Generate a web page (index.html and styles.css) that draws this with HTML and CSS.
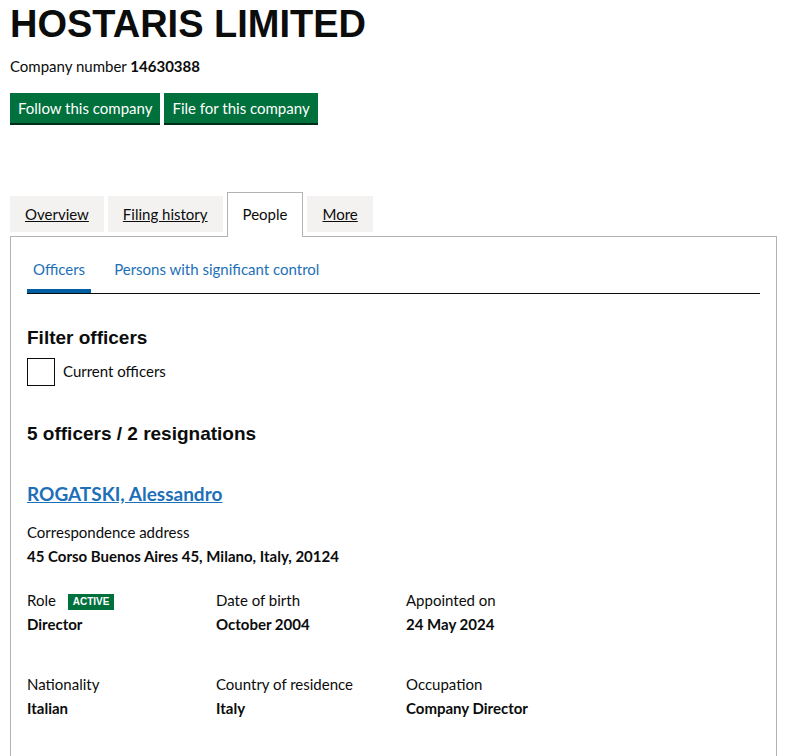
FILE: index.html
```html
<html>
<head>
	<title>HOSTARIS LIMITED people</title>
<link rel="stylesheet" href="styles.css">
</head>
<body>
<div class="page">

<h1 class="company-name">HOSTARIS LIMITED</h1>
<p class="company-number">Company number <strong>14630388</strong></p>

<div class="actions">
	<a class="button" href="#">Follow this company</a>
	<a class="button" href="#">File for this company</a>
</div>

<ul class="tabs">
	<li class="tab"><a href="#">Overview</a></li>
	<li class="tab"><a href="#">Filing history</a></li>
	<li class="tab tab-active"><span>People</span></li>
	<li class="tab"><a href="#">More</a></li>
</ul>

<div class="panel">
	<ul class="subnav">
		<li class="subnav-item subnav-active"><a href="#">Officers</a></li>
		<li class="subnav-item"><a href="#">Persons with significant control</a></li>
	</ul>

	<h2 class="heading filter-heading">Filter officers</h2>
	<label class="check">
		<span class="check-box"></span>
		<span class="check-label">Current officers</span>
	</label>

	<h2 class="heading count-heading">5 officers / 2 resignations</h2>

	<div class="appointment">
		<h3 class="officer-name"><a href="#">ROGATSKI, Alessandro</a></h3>
		<dl class="address">
			<dt>Correspondence address</dt>
			<dd>45 Corso Buenos Aires 45, Milano, Italy, 20124</dd>
		</dl>
		<div class="details">
			<dl>
				<dt>Role <span class="tag">Active</span></dt>
				<dd>Director</dd>
			</dl>
			<dl>
				<dt>Date of birth</dt>
				<dd>October 2004</dd>
			</dl>
			<dl>
				<dt>Appointed on</dt>
				<dd>24 May 2024</dd>
			</dl>
			<dl>
				<dt>Nationality</dt>
				<dd>Italian</dd>
			</dl>
			<dl>
				<dt>Country of residence</dt>
				<dd>Italy</dd>
			</dl>
			<dl>
				<dt>Occupation</dt>
				<dd>Company Director</dd>
			</dl>
		</div>
	</div>
</div>

</div>
</body>
</html>
```

FILE: styles.css
```css
BODY {margin:0; color:#0b0c0c; background-color:white; font-family: Lato, "Liberation Sans", Arial, sans-serif; font-size:15px;}
.page {padding:0 10px;}
A {color:#0b0c0c;}

.company-name {margin:5px 0 0; font-family: "Liberation Sans", Arial, sans-serif; font-size:38px; line-height:38px; font-weight:bold;}
.company-number {margin:13px 0 0; line-height:20px;}
.company-number strong {font-weight:bold;}

.actions {display:flex; gap:4px; margin-top:17px;}
.button {display:block; padding:4px 8px; line-height:22px; color:white; background-color:#00703c; box-shadow:0 2px 0 #002d18; text-decoration:none;}

.tabs {display:flex; align-items:flex-start; margin:69px 0 0; padding:0; list-style:none;}
.tab {margin:4px 4px 0 0; padding:0 15px; height:36px; line-height:36px; background-color:#f3f2f1;}
.tab a {color:#0b0c0c; text-decoration:underline;}
.tab-active {position:relative; margin:0 4px -1px 0; padding:3px 15px 5px; background-color:white; border:1px solid #b1b4b6; border-bottom:0;}

.panel {border:1px solid #b1b4b6; padding:20px 16px 60px;}

.subnav {display:flex; gap:17px; margin:0; padding:0; list-style:none; border-bottom:1px solid #0b0c0c;}
.subnav-item {padding:0 6px 8px; line-height:24px; border-bottom:4px solid transparent;}
.subnav-item a {color:#1d70b8; text-decoration:none;}
.subnav-active {border-bottom-color:#005ea5;}

.heading {margin:0; font-family: "Liberation Sans", Arial, sans-serif; font-size:19px; line-height:25px; font-weight:bold;}
.filter-heading {margin-top:31px;}
.count-heading {margin-top:35px;}

.check {display:flex; align-items:flex-start; gap:8px; margin-top:8px;}
.check-box {box-sizing:border-box; width:28px; height:28px; border:1px solid #0b0c0c;}
.check-label {margin-top:3px; line-height:20px;}

.officer-name {margin:36px 0 0; font-size:19px; line-height:24px; font-weight:bold;}
.officer-name a {color:#1d70b8; text-decoration:underline;}

DL {margin:0;}
DT {line-height:24px;}
DD {margin:0; line-height:24px; font-weight:bold;}
.address {margin-top:14px;}

.details {display:grid; grid-template-columns:189px 190px 1fr; row-gap:36px; margin-top:20px;}

.tag {display:inline-block; margin-left:8px; padding:0 5px; line-height:16px; vertical-align:1px; font-family: "Liberation Sans", Arial, sans-serif; font-size:10px; font-weight:bold; text-transform:uppercase; color:white; background-color:#00703c;}
```
